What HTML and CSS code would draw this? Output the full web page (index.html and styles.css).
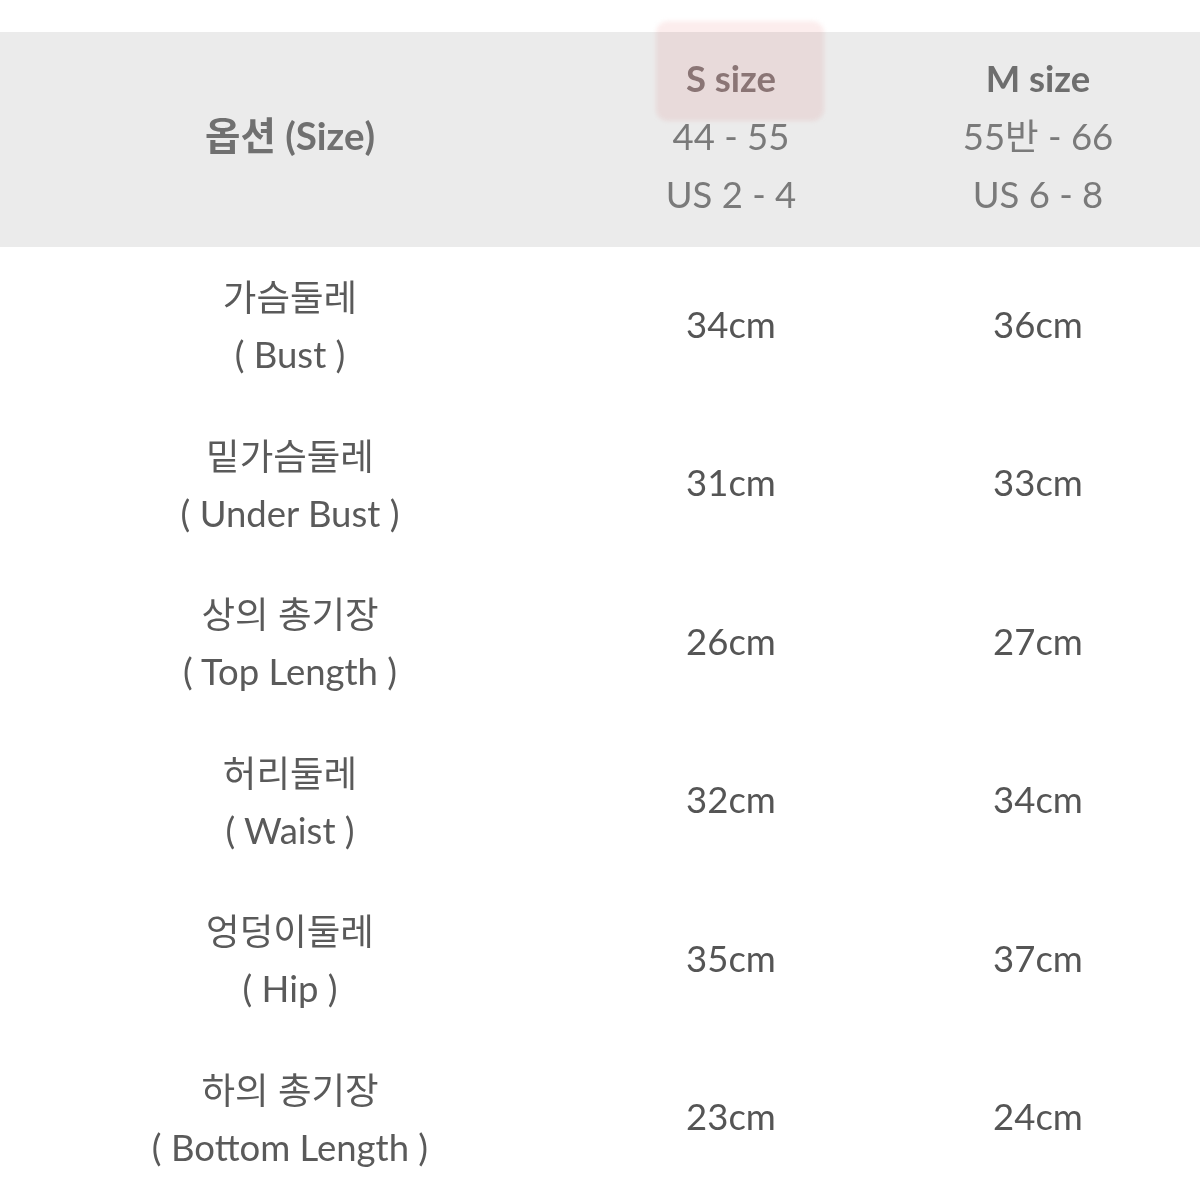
FILE: index.html
```html
<!DOCTYPE html>
<html lang="ko">
<head>
<meta charset="utf-8">
<title>Size chart</title>
<link rel="stylesheet" href="styles.css">
</head>
<body>
<div class="page">
  <div class="table">
    <div class="row head">
      <div class="cell label-head">옵션 (Size)</div>
      <div class="cell size s-col">
        <span class="hl"></span>
        <div class="size-name">S size</div>
        <div>44 - 55</div>
        <div>US 2 - 4</div>
      </div>
      <div class="cell size">
        <div class="size-name">M size</div>
        <div>55반 - 66</div>
        <div>US 6 - 8</div>
      </div>
    </div>
    <div class="row">
      <div class="cell label"><div>가슴둘레</div><div>( Bust )</div></div>
      <div class="cell val">34cm</div>
      <div class="cell val">36cm</div>
    </div>
    <div class="row">
      <div class="cell label"><div>밑가슴둘레</div><div>( Under Bust )</div></div>
      <div class="cell val">31cm</div>
      <div class="cell val">33cm</div>
    </div>
    <div class="row">
      <div class="cell label"><div>상의 총기장</div><div>( Top Length )</div></div>
      <div class="cell val">26cm</div>
      <div class="cell val">27cm</div>
    </div>
    <div class="row">
      <div class="cell label"><div>허리둘레</div><div>( Waist )</div></div>
      <div class="cell val">32cm</div>
      <div class="cell val">34cm</div>
    </div>
    <div class="row">
      <div class="cell label"><div>엉덩이둘레</div><div>( Hip )</div></div>
      <div class="cell val">35cm</div>
      <div class="cell val">37cm</div>
    </div>
    <div class="row">
      <div class="cell label"><div>하의 총기장</div><div>( Bottom Length )</div></div>
      <div class="cell val">23cm</div>
      <div class="cell val">24cm</div>
    </div>
  </div>
</div>
</body>
</html>
```
FILE: styles.css
```css
* { box-sizing: border-box; }
html, body {
  margin: 0;
  padding: 0;
  background: #ffffff;
}
body {
  font-family: Lato, "Noto Sans CJK KR", sans-serif;
  color: #555555;
}
.page {
  padding-top: 32px;
  width: 1200px;
}
.table {
  display: flex;
  flex-direction: column;
}
.row {
  display: grid;
  grid-template-columns: 580px 302px 312px;
  height: 158.5px;
  align-items: center;
}
.row.head {
  height: 215px;
  padding-bottom: 8px;
  background: #ebebeb;
}
.cell {
  text-align: center;
  font-size: 36.5px;
  line-height: 57px;
}
.label-head {
  font-weight: 700;
  font-size: 38.5px;
  color: #707070;
}
.size {
  color: #7a7a7a;
  line-height: 58px;
  position: relative;
}
.size-name {
  font-weight: 700;
  color: #6e6e6e;
}
.s-col .size-name {
  color: #8a7575;
  position: relative;
  z-index: 1;
}
.hl {
  position: absolute;
  left: 76px;
  top: -28px;
  width: 168px;
  height: 100px;
  background: rgba(245, 200, 200, 0.32);
  border-radius: 12px;
  filter: blur(2px);
  mix-blend-mode: multiply;
}
.label {
  color: #5a5a5a;
}
.val {
  color: #555555;
  padding-bottom: 4px;
}
```
